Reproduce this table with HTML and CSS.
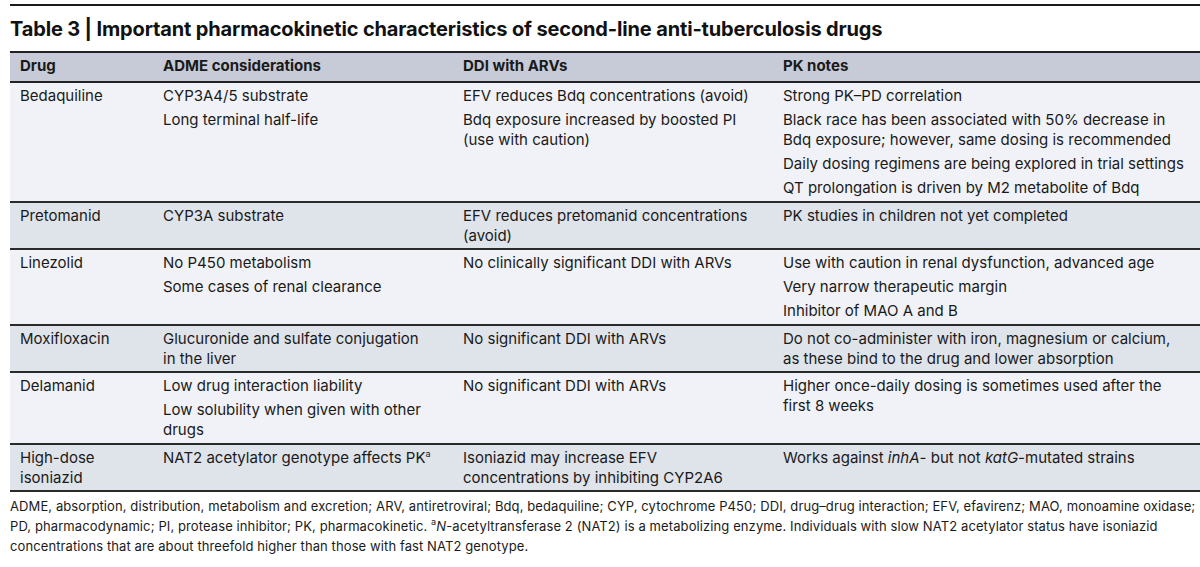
FILE: index.html
```html
<!DOCTYPE html>
<html lang="en">
<head>
<meta charset="utf-8">
<title>Table 3</title>
<link rel="stylesheet" href="styles.css">
</head>
<body>
<div class="page">
  <div class="rule"></div>
  <h1 class="title">Table 3 | Important pharmacokinetic characteristics of second-line anti-tuberculosis drugs</h1>
  <table class="tbl">
    <colgroup>
      <col class="c1"><col class="c2"><col class="c3"><col class="c4">
    </colgroup>
    <thead>
      <tr><th>Drug</th><th>ADME considerations</th><th>DDI with ARVs</th><th>PK notes</th></tr>
    </thead>
    <tbody>
      <tr class="light">
        <td>Bedaquiline</td>
        <td><div class="it">CYP3A4/5 substrate</div><div class="it">Long terminal half-life</div></td>
        <td><div class="it">EFV reduces Bdq concentrations (avoid)</div><div class="it">Bdq exposure increased by boosted PI<br>(use with caution)</div></td>
        <td><div class="it">Strong PK–PD correlation</div><div class="it">Black race has been associated with 50% decrease in<br>Bdq exposure; however, same dosing is recommended</div><div class="it">Daily dosing regimens are being explored in trial settings</div><div class="it">QT prolongation is driven by M2 metabolite of Bdq</div></td>
      </tr>
      <tr class="dark">
        <td>Pretomanid</td>
        <td><div class="it">CYP3A substrate</div></td>
        <td><div class="it">EFV reduces pretomanid concentrations<br>(avoid)</div></td>
        <td><div class="it">PK studies in children not yet completed</div></td>
      </tr>
      <tr class="light">
        <td>Linezolid</td>
        <td><div class="it">No P450 metabolism</div><div class="it">Some cases of renal clearance</div></td>
        <td><div class="it">No clinically significant DDI with ARVs</div></td>
        <td><div class="it">Use with caution in renal dysfunction, advanced age</div><div class="it">Very narrow therapeutic margin</div><div class="it">Inhibitor of MAO A and B</div></td>
      </tr>
      <tr class="dark">
        <td>Moxifloxacin</td>
        <td><div class="it">Glucuronide and sulfate conjugation<br>in the liver</div></td>
        <td><div class="it">No significant DDI with ARVs</div></td>
        <td><div class="it">Do not co-administer with iron, magnesium or calcium,<br>as these bind to the drug and lower absorption</div></td>
      </tr>
      <tr class="light">
        <td>Delamanid</td>
        <td><div class="it">Low drug interaction liability</div><div class="it">Low solubility when given with other<br>drugs</div></td>
        <td><div class="it">No significant DDI with ARVs</div></td>
        <td><div class="it">Higher once-daily dosing is sometimes used after the<br>first 8 weeks</div></td>
      </tr>
      <tr class="dark">
        <td>High-dose<br>isoniazid</td>
        <td><div class="it">NAT2 acetylator genotype affects PK<sup>a</sup></div></td>
        <td><div class="it">Isoniazid may increase EFV<br>concentrations by inhibiting CYP2A6</div></td>
        <td><div class="it">Works against <i>inhA</i>- but not <i>katG</i>-mutated strains</div></td>
      </tr>
    </tbody>
  </table>
  <p class="foot">ADME, absorption, distribution, metabolism and excretion; ARV, antiretroviral; Bdq, bedaquiline; CYP, cytochrome P450; DDI, drug–drug interaction; EFV, efavirenz; MAO, monoamine oxidase;<br>PD, pharmacodynamic; PI, protease inhibitor; PK, pharmacokinetic. <sup>a</sup><i>N</i>-acetyltransferase 2 (NAT2) is a metabolizing enzyme. Individuals with slow NAT2 acetylator status have isoniazid<br>concentrations that are about threefold higher than those with fast NAT2 genotype.</p>
</div>
</body>
</html>
```
FILE: styles.css
```css
html, body {
  margin: 0;
  padding: 0;
  background: #ffffff;
  overflow: hidden;
}
body {
  width: 1200px;
  height: 567px;
  font-family: Inter, "Liberation Sans", sans-serif;
  color: #1a1a1a;
}
.page {
  padding: 4px 0 0 10px;
  width: 1220px;
}
.rule {
  height: 2px;
  background: #1a1a1a;
}
.title {
  margin: 10px 0 0 0;
  font-size: 20px;
  line-height: 26px;
  font-weight: 700;
  color: #111;
  height: 35px;
  letter-spacing: -0.15px;
  white-space: nowrap;
}
.tbl {
  border-collapse: collapse;
  width: 1230px;
  table-layout: fixed;
  font-size: 15px;
  line-height: 20px;
}
.c1 { width: 143px; }
.c2 { width: 300px; }
.c3 { width: 320px; }
.c4 { width: auto; }
.tbl th {
  background: #c6cbd7;
  text-align: left;
  font-weight: 700;
  padding: 3px 10px 5px 10px;
  border-top: 2px solid #222;
  border-bottom: 2px solid #222;
}
.tbl td {
  vertical-align: top;
  padding: 3px 10px 3px 10px;
  border-bottom: 2px solid #2a2a2a;
}
.tbl tr.light td { background: #f0f2f7; }
.tbl tr.dark td { background: #dfe3ea; }
.tbl tr.dark td { padding-bottom: 2px; }
.it + .it { margin-top: 4px; }
sup {
  font-size: 9px;
  line-height: 0;
  vertical-align: 6px;
}
.foot {
  margin: 4px 0 0 0;
  width: 1200px;
  font-size: 13px;
  line-height: 20px;
  letter-spacing: 0.1px;
  color: #1a1a1a;
  white-space: nowrap;
}
```
